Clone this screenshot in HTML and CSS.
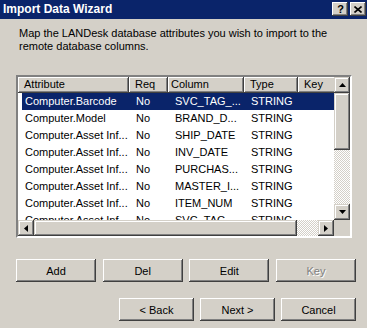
FILE: index.html
```html
<!DOCTYPE html>
<html>
<head>
    <title>Import Data Wizard</title>
    <meta name="viewport" content="width=device-width, initial-scale=1.0">
    <link rel="stylesheet" href="styles.css">
</head>
<body>
    <div class="titlebar">
        <span class="title">Import Data Wizard</span>
        <div class="caption-buttons">
            <span class="cap-btn help">?</span>
            <span class="cap-btn">
                <svg width="8" height="7" viewBox="0 0 8 7">
                    <path d="M0.5 0.5 L7.5 6.5 M7.5 0.5 L0.5 6.5" stroke="#000" stroke-width="1.6" fill="none"/>
                </svg>
            </span>
        </div>
    </div>

    <div class="content">
        <p class="intro">Map the LANDesk database attributes you wish to import to the<br>remote database columns.</p>

        <!-- attribute list -->
        <div class="listview">
            <div class="lv-body">
                <div class="lv-header">
                    <div class="hd-cell col-attr">Attribute</div>
                    <div class="hd-cell col-req">Req</div>
                    <div class="hd-cell col-column narrow">Column</div>
                    <div class="hd-cell col-type">Type</div>
                    <div class="hd-cell col-key">Key</div>
                </div>
                <div class="row selected">
                    <div class="cell col-first">Computer.Barcode</div>
                    <div class="cell col-req">No</div>
                    <div class="cell col-column">SVC_TAG_...</div>
                    <div class="cell col-type">STRING</div>
                    <div class="cell col-key"></div>
                </div>
                <div class="row">
                    <div class="cell col-first">Computer.Model</div>
                    <div class="cell col-req">No</div>
                    <div class="cell col-column">BRAND_D...</div>
                    <div class="cell col-type">STRING</div>
                    <div class="cell col-key"></div>
                </div>
                <div class="row">
                    <div class="cell col-first">Computer.Asset Inf...</div>
                    <div class="cell col-req">No</div>
                    <div class="cell col-column">SHIP_DATE</div>
                    <div class="cell col-type">STRING</div>
                    <div class="cell col-key"></div>
                </div>
                <div class="row">
                    <div class="cell col-first">Computer.Asset Inf...</div>
                    <div class="cell col-req">No</div>
                    <div class="cell col-column">INV_DATE</div>
                    <div class="cell col-type">STRING</div>
                    <div class="cell col-key"></div>
                </div>
                <div class="row">
                    <div class="cell col-first">Computer.Asset Inf...</div>
                    <div class="cell col-req">No</div>
                    <div class="cell col-column">PURCHAS...</div>
                    <div class="cell col-type">STRING</div>
                    <div class="cell col-key"></div>
                </div>
                <div class="row">
                    <div class="cell col-first">Computer.Asset Inf...</div>
                    <div class="cell col-req">No</div>
                    <div class="cell col-column">MASTER_I...</div>
                    <div class="cell col-type">STRING</div>
                    <div class="cell col-key"></div>
                </div>
                <div class="row">
                    <div class="cell col-first">Computer.Asset Inf...</div>
                    <div class="cell col-req">No</div>
                    <div class="cell col-column">ITEM_NUM</div>
                    <div class="cell col-type">STRING</div>
                    <div class="cell col-key"></div>
                </div>
                <div class="row">
                    <div class="cell col-first">Computer.Asset Inf...</div>
                    <div class="cell col-req">No</div>
                    <div class="cell col-column">SVC_TAG...</div>
                    <div class="cell col-type">STRING</div>
                    <div class="cell col-key"></div>
                </div>
            </div>

            <div class="vscroll">
                <div class="sb-btn">
                    <svg width="7" height="4" viewBox="0 0 7 4"><polygon points="3.5,0 7,4 0,4" fill="#000"/></svg>
                </div>
                <div class="sb-thumb v-thumb"></div>
                <div class="sb-track"></div>
                <div class="sb-btn">
                    <svg width="7" height="4" viewBox="0 0 7 4"><polygon points="0,0 7,0 3.5,4" fill="#000"/></svg>
                </div>
            </div>

            <div class="hscroll">
                <div class="sb-btn">
                    <svg width="4" height="7" viewBox="0 0 4 7"><polygon points="4,0 4,7 0,3.5" fill="#000"/></svg>
                </div>
                <div class="sb-thumb h-thumb"></div>
                <div class="sb-track"></div>
                <div class="sb-btn">
                    <svg width="4" height="7" viewBox="0 0 4 7"><polygon points="0,0 4,3.5 0,7" fill="#000"/></svg>
                </div>
            </div>

            <div class="corner"></div>
        </div>

        <div class="button-row edit-row">
            <button class="button">Add</button>
            <button class="button">Del</button>
            <button class="button">Edit</button>
            <button class="button" disabled>Key</button>
        </div>

        <div class="button-row nav-row">
            <button class="button nav">&lt; Back</button>
            <button class="button nav">Next &gt;</button>
            <button class="button nav">Cancel</button>
        </div>
    </div>
</body>
</html>
```

FILE: styles.css
```css
body {
    margin: 0;
    width: 367px;
    height: 328px;
    overflow: hidden;
    background-color: #d4d0c8;
    font-family: "Liberation Sans", Arial, sans-serif;
    font-size: 11px;
    color: #000;
}

.titlebar {
    height: 19px;
    background-color: #0a246a;
    display: flex;
    align-items: center;
    justify-content: space-between;
    padding: 0 1px 0 3px;
}

.title {
    color: #fff;
    font-weight: bold;
    font-size: 12px;
    line-height: 19px;
}

.caption-buttons {
    display: flex;
    gap: 2px;
    margin-top: -1px;
}

.cap-btn {
    width: 16px;
    height: 14px;
    display: flex;
    align-items: center;
    justify-content: center;
    background-color: #d4d0c8;
    box-shadow: inset -1px -1px #404040, inset 1px 1px #fff, inset -2px -2px #808080;
    box-sizing: border-box;
}

.cap-btn.help {
    font-weight: bold;
    font-size: 11px;
    line-height: 14px;
    padding-left: 1px;
}

.content {
    padding: 8px 0 0 16px;
}

.intro {
    margin: 0;
    padding-left: 3px;
    line-height: 13px;
}

/* list view */
.listview {
    margin-top: 22px;
    width: 336px;
    height: 163px;
    box-sizing: border-box;
    border: 2px solid;
    border-color: #808080 #fff #fff #808080;
    box-shadow: inset 1px 1px #404040, inset -1px -1px #d4d0c8;
    padding: 1px 1px 1px 1px;
    display: grid;
    grid-template-columns: 316px 16px;
    grid-template-rows: 143px 16px;
    margin-left: 0;
    background-color: #fff;
    padding: 0;
}

.lv-body {
    overflow: hidden;
    background-color: #fff;
}

.lv-header {
    display: flex;
    height: 16px;
}

.hd-cell {
    flex: none;
    height: 16px;
    line-height: 15px;
    padding-left: 6px;
    box-sizing: border-box;
    background-color: #d4d0c8;
    box-shadow: inset -1px -1px #404040, inset 1px 1px #fff, inset -2px -2px #808080;
    white-space: nowrap;
}

.hd-cell.narrow {
    padding-left: 3px;
}

.hd-cell.col-attr { width: 111px; }
.col-req { width: 39px; }
.col-column { width: 76px; }
.col-type { width: 54px; }
.col-key { width: 60px; }

.row {
    display: flex;
    height: 17px;
    padding-left: 4px;
}

.cell {
    flex: none;
    line-height: 17px;
    padding-left: 7px;
    box-sizing: border-box;
    white-space: nowrap;
    overflow: hidden;
}

.cell.col-first {
    width: 107px;
    padding-left: 3px;
}

.row.selected .cell {
    background-color: #0a246a;
    color: #fff;
}

/* scrollbars */
.vscroll {
    display: flex;
    flex-direction: column;
}

.hscroll {
    display: flex;
}

.sb-btn {
    flex: none;
    width: 16px;
    height: 16px;
    display: flex;
    align-items: center;
    justify-content: center;
    background-color: #d4d0c8;
    box-shadow: inset -1px -1px #404040, inset 1px 1px #d4d0c8, inset -2px -2px #808080, inset 2px 2px #fff;
}

.sb-thumb {
    flex: none;
    background-color: #d4d0c8;
    box-shadow: inset -1px -1px #404040, inset 1px 1px #d4d0c8, inset -2px -2px #808080, inset 2px 2px #fff;
}

.v-thumb {
    height: 57px;
}

.h-thumb {
    width: 263px;
}

.sb-track {
    flex: 1;
    background-image: conic-gradient(#fff 25%, #d4d0c8 0 50%, #fff 0 75%, #d4d0c8 0);
    background-size: 2px 2px;
}

.corner {
    background-color: #d4d0c8;
}

/* buttons */
.button-row {
    display: flex;
}

.edit-row {
    margin-top: 21px;
    width: 340px;
    justify-content: space-between;
}

.nav-row {
    margin-top: 16px;
    width: 340px;
    justify-content: flex-end;
    gap: 6px;
}

.button {
    width: 80px;
    height: 23px;
    padding: 0;
    border: none;
    background-color: #d4d0c8;
    font-family: "Liberation Sans", Arial, sans-serif;
    font-size: 11px;
    color: #000;
    box-shadow: inset -1px -1px #404040, inset 1px 1px #fff, inset -2px -2px #808080;
}

.button.nav {
    width: 75px;
}

.button:disabled {
    color: #808080;
    text-shadow: 1px 1px #fff;
}
```
